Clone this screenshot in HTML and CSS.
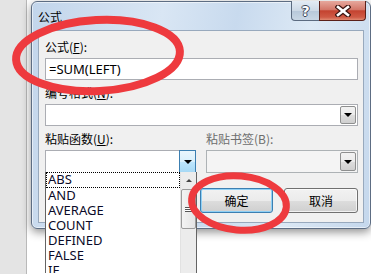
FILE: index.html
```
<!DOCTYPE html>
<html lang="zh-CN">
<head>
  <meta charset="UTF-8">
  <title>公式</title>
  <link rel="stylesheet" href="styles.css">
</head>
<body>

  <div class="desk">
    <div class="ruler"></div>
    <div class="page">
      <div class="dialog">
        <div class="titlebar">
          <span class="title">公式</span>
          <div class="caption-btns">
            <div class="cap help">?</div>
            <div class="cap close">
              <svg width="16" height="12" viewBox="0 0 16 12">
                <path d="M3 2 L13 10 M13 2 L3 10" stroke="#3b1410" stroke-width="5" stroke-linecap="square"/>
                <path d="M3 2 L13 10 M13 2 L3 10" stroke="#fff" stroke-width="2.6" stroke-linecap="square"/>
              </svg>
            </div>
          </div>
        </div>

        <div class="client">
          <div class="lbl">公式(<u>F</u>):</div>
          <div class="field">=SUM(LEFT)</div>

          <div class="lbl">编号格式(<u>N</u>):</div>
          <div class="combo">
            <span class="val"></span>
            <span class="arrow"><i class="tri"></i></span>
          </div>

          <div class="cols">
            <div class="col col-left">
              <div class="lbl">粘贴函数(<u>U</u>):</div>
              <div class="combo hot">
                <span class="val"></span>
                <span class="arrow"><i class="tri"></i></span>
                <div class="droplist">
                  <ul class="items">
                    <li class="focus">ABS</li>
                    <li>AND</li>
                    <li>AVERAGE</li>
                    <li>COUNT</li>
                    <li>DEFINED</li>
                    <li>FALSE</li>
                    <li>IF</li>
                  </ul>
                  <div class="sbar">
                    <div class="sbtn"><i class="tri up"></i></div>
                    <div class="thumb"><span class="grip"></span></div>
                  </div>
                </div>
              </div>
            </div>
            <div class="col col-right">
              <div class="lbl disabled">粘贴书签(B):</div>
              <div class="combo off">
                <span class="val"></span>
                <span class="arrow"><i class="tri"></i></span>
              </div>
            </div>
          </div>

          <div class="actions">
            <div class="btn default">确定</div>
            <div class="btn">取消</div>
          </div>
        </div>
      </div>
    </div>
  </div>

  <svg class="marks" width="371" height="274" viewBox="0 0 371 274">
    <ellipse cx="98" cy="55.5" rx="82" ry="35.5" transform="rotate(-3 98 55.5)" fill="none" stroke="#ee3a3e" stroke-width="8"/>
    <ellipse cx="239" cy="203" rx="47.5" ry="27" transform="rotate(5 239 203)" fill="none" stroke="#ee3a3e" stroke-width="7"/>
  </svg>

</body>
</html>
```

FILE: styles.css
```
* { box-sizing: border-box; }

body {
  margin: 0;
  width: 371px;
  height: 274px;
  overflow: hidden;
  position: relative;
  background: #fff;
  font-family: "Noto Sans CJK SC", "Noto Sans", sans-serif;
  font-size: 12px;
  color: #000;
}

.desk {
  display: flex;
  height: 274px;
}

.ruler {
  width: 27px;
  background: #e4e4e4;
  border-right: 1px solid #b9b9b9;
}

.page {
  flex: 1;
  padding: 1px 0 0 4px;
  background: #fff;
}

/* window */
.dialog {
  width: 340px;
  height: 228px;
  border: 1px solid #5d6d83;
  border-radius: 6px;
  padding-bottom: 5px;
  background: linear-gradient(100deg, #c2d5eb 0%, #d9e6f4 35%, #c8daee 55%, #dde9f5 75%, #c4d7ec 100%);
  box-shadow: inset 0 0 0 1px rgba(255, 255, 255, 0.55), 0 3px 10px rgba(0, 0, 0, 0.45);
}

.titlebar {
  height: 28px;
  display: flex;
  align-items: center;
  justify-content: space-between;
  padding: 0 4px 0 6px;
}

.title {
  line-height: 16px;
  margin-top: 1px;
}

.caption-btns {
  align-self: flex-start;
  display: flex;
  margin-top: -1px;
}

.cap {
  height: 20px;
  display: flex;
  align-items: center;
  justify-content: center;
  border: 1px solid #5c6b80;
  border-top: none;
}

.help {
  width: 28px;
  border-right: none;
  border-radius: 0 0 0 4px;
  background: linear-gradient(#e3ebf4, #cdd9e6 50%, #b7c8da 51%, #c9d7e5);
  font-family: "DejaVu Sans", sans-serif;
  font-weight: bold;
  font-size: 14px;
  color: #fff;
  text-shadow: 1px 0 0 #3a4658, -1px 0 0 #3a4658, 0 1px 0 #3a4658, 0 -1px 0 #3a4658;
}

.close {
  width: 47px;
  border-color: #5a2019;
  border-radius: 0 0 4px 0;
  background: linear-gradient(#e6a89d, #d4786a 45%, #c44330 52%, #cf5a45 85%, #e08a72);
}

.client {
  margin: 0 6px;
  height: 193px;
  border: 1px solid #98a9bd;
  background: #f0f0f0;
  padding: 8px 5px 8px 6px;
}

.lbl {
  line-height: 16px;
  margin-bottom: 3px;
}

.lbl.disabled { color: #6d6d6d; }

.field {
  height: 22px;
  border: 1px solid #abadb3;
  background: #fff;
  padding: 0 3px;
  font-family: "Noto Sans", sans-serif;
  font-size: 13px;
  line-height: 20px;
  margin-bottom: 5px;
}

.combo {
  position: relative;
  height: 22px;
  border: 1px solid #abadb3;
  background: #fff;
  display: flex;
  justify-content: space-between;
  padding: 1px;
  margin-bottom: 5px;
}

.combo .arrow {
  width: 16px;
  border: 1px solid #8e8f8f;
  border-radius: 2px;
  background: linear-gradient(#f2f2f2, #ebebeb 50%, #dddddd 51%, #cfcfcf);
  display: flex;
  align-items: center;
  justify-content: center;
}

.tri {
  width: 0;
  height: 0;
  border-left: 4px solid transparent;
  border-right: 4px solid transparent;
  border-top: 4px solid #000;
}

.tri.up {
  border-top: none;
  border-bottom: 4px solid #000;
}

.cols {
  display: flex;
  gap: 10px;
}

.col-left { width: 151px; }
.col-right { width: 152px; }

.combo.hot,
.combo.off {
  height: 23px;
  margin-bottom: 0;
}

.combo.hot .arrow {
  margin: -2px -2px -2px 0;
  width: 17px;
  border-color: #3c7fb1;
  border-radius: 0;
  background: linear-gradient(#eaf6fd, #d9f0fc 50%, #bee6fd 51%, #a7d9f5);
}

.combo.off {
  background: #f4f4f4;
  border-color: #adb2b5;
}

/* popup list */
.droplist {
  position: absolute;
  top: 100%;
  left: -1px;
  width: 152px;
  height: 101px;
  border-left: 1px solid #646464;
  border-right: 1px solid #646464;
  background: #fff;
  display: flex;
}

.items {
  list-style: none;
  margin: 0;
  padding: 0;
  flex: 1;
  overflow: hidden;
  font-family: "Noto Sans", sans-serif;
  font-size: 13px;
  line-height: 15px;
  color: #0a0a28;
}

.items li {
  height: 15px;
  padding-left: 2px;
}

.items li.focus {
  height: 16px;
  outline: 1px dotted #000;
  outline-offset: -1px;
}

.sbar {
  width: 16px;
  background: #ececec;
  border-left: 1px solid #e2e2e2;
  display: flex;
  flex-direction: column;
}

.sbtn {
  height: 16px;
  display: flex;
  align-items: center;
  justify-content: center;
}

.sbtn .tri {
  border-left-width: 3px;
  border-right-width: 3px;
  border-bottom-width: 3px;
  border-bottom-color: #444;
}

.thumb {
  height: 40px;
  margin-top: 1px;
  border: 1px solid #9b9b9b;
  border-radius: 2px;
  background: linear-gradient(90deg, #f3f3f3, #e4e4e4);
  display: flex;
  align-items: center;
  justify-content: center;
}

.grip {
  width: 7px;
  height: 5px;
  border-top: 1px solid #555;
  border-bottom: 1px solid #555;
  background: linear-gradient(#fff 1px, #555 1px, #555 2px, #fff 2px) center / 100% 3px no-repeat;
}

/* buttons */
.actions {
  display: flex;
  justify-content: flex-end;
  gap: 11px;
  margin-top: 15px;
}

.btn {
  width: 74px;
  height: 25px;
  border: 1px solid #707070;
  border-radius: 3px;
  background: linear-gradient(#f2f2f2, #ebebeb 50%, #dddddd 51%, #cfcfcf);
  box-shadow: inset 0 0 0 1px rgba(255, 255, 255, 0.7);
  display: flex;
  align-items: center;
  justify-content: center;
  line-height: 16px;
}

.btn.default {
  width: 73px;
  border-color: #3c7fb1;
  box-shadow: inset 0 0 0 1px #8fd0f5;
}

.marks {
  position: absolute;
  top: 0;
  left: 0;
  pointer-events: none;
}
```
